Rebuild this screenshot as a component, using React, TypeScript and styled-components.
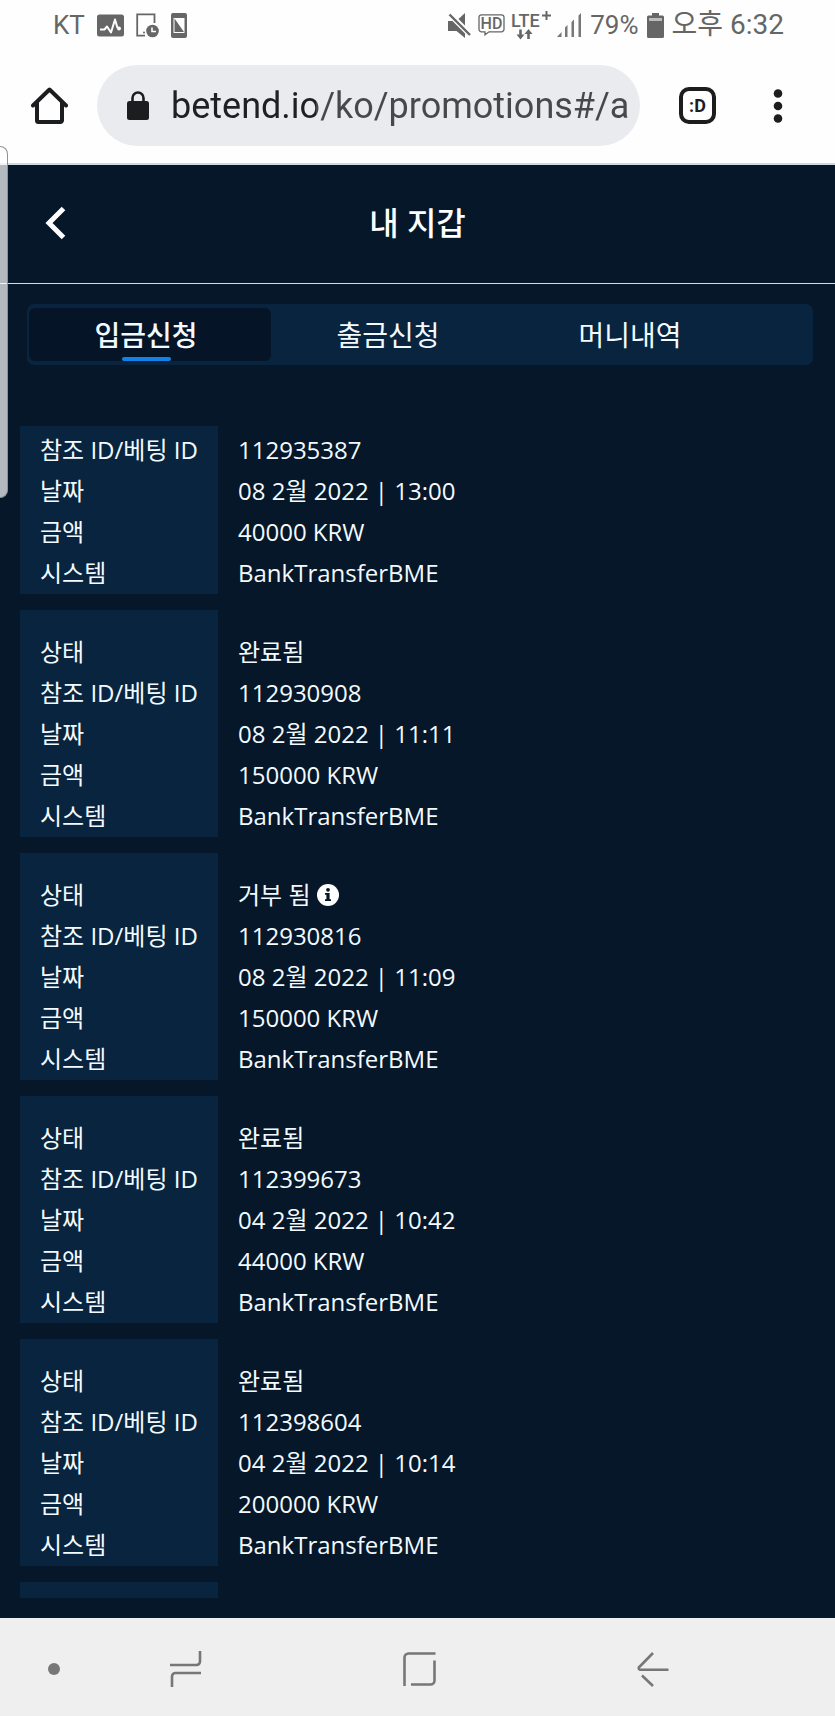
import React from "react";
import styled, { createGlobalStyle } from "styled-components";

const GlobalStyle = createGlobalStyle`
  *, *::before, *::after { box-sizing: border-box; }
  body { margin: 0; background: #051729; }
  button { border: 0; padding: 0; background: none; color: inherit; font: inherit; cursor: pointer; }
  svg { display: block; flex: none; }
`;

const textFont = `"Open Sans", "Noto Sans CJK KR", sans-serif`;
const systemFont = `Roboto, "Noto Sans CJK KR", sans-serif`;

const Screen = styled.div`
  position: relative;
  display: flex;
  flex-direction: column;
  min-height: 100vh;
  background: #051729;
  color: #f3fafe;
  font-family: ${textFont};
`;

const StatusBar = styled.div`
  display: flex;
  align-items: center;
  justify-content: space-between;
  height: 50px;
  padding: 0 51px 0 53px;
  background: #fefefe;
  color: #666;
  font: 26px/50px ${systemFont};
`;

const StatusGroup = styled.div<{ $gap: number }>`
  display: flex;
  align-items: center;
  gap: ${(p) => p.$gap}px;
  white-space: nowrap;
`;

const Clock = styled.time`
  font-size: 28px;
`;

const Toolbar = styled.div`
  display: flex;
  align-items: center;
  height: 115px;
  padding: 0 36px 2px 31px;
  background: #fefefe;
  border-bottom: 2px solid #d3dadd;
  color: #1c1d1f;
`;

const AddressBox = styled.label`
  display: flex;
  align-items: center;
  flex: 1;
  min-width: 0;
  height: 81px;
  margin: 0 39px 0 29px;
  padding: 0 10px 0 30px;
  gap: 22px;
  border-radius: 41px;
  background: #eaebef;
`;

const AddressInput = styled.input`
  flex: 1;
  min-width: 0;
  height: 60px;
  padding: 0;
  border: 0;
  outline: 0;
  background: linear-gradient(90deg, #1f2023 145px, #46484b 145px);
  background-clip: text;
  color: transparent;
  font: 36px Roboto, sans-serif;
`;

const TabSwitcher = styled.button`
  width: 37px;
  height: 37px;
  margin-right: 41px;
  border: 4px solid currentColor;
  border-radius: 10px;
  font: 700 18px/26px Roboto, sans-serif;
`;

const MenuButton = styled.button`
  display: flex;
  justify-content: center;
  width: 42px;
`;

const EdgeHandle = styled.div`
  position: absolute;
  top: 146px;
  left: 0;
  width: 8px;
  height: 352px;
  border: 1px solid #8a9399;
  border-left: 0;
  border-radius: 0 8px 8px 0;
  background: rgba(255, 255, 255, 0.7);
`;

const Header = styled.header`
  display: grid;
  grid-template-columns: 120px 1fr 120px;
  align-items: center;
  height: 119px;
  padding-bottom: 3px;
  border-bottom: 1px solid #d5dbe0;
`;

const BackButton = styled.button`
  justify-self: start;
  padding-left: 45px;
`;

const Title = styled.h1`
  margin: 0;
  text-align: center;
  font-size: 32px;
  line-height: 40px;
  font-weight: 500;
  color: #fff;
`;

const Tabs = styled.nav`
  display: flex;
  height: 61px;
  margin: 20px 22px 61px 27px;
  padding: 4px 58px 4px 2px;
  border-radius: 7px;
  background: #08243f;
`;

const Tab = styled.button<{ $active?: boolean }>`
  display: flex;
  flex-direction: column;
  align-items: center;
  justify-content: space-between;
  flex: 1;
  padding: 6px 8px 0 0;
  border-radius: 6px;
  background: ${(p) => (p.$active ? "#051527" : "transparent")};
  font-size: 28px;
  line-height: 43px;
  font-weight: ${(p) => (p.$active ? 500 : 400)};

  &::after {
    content: "";
    width: 49px;
    height: 4px;
    border-radius: 2px;
    background: ${(p) => (p.$active ? "#1481e6" : "transparent")};
  }
`;

const Records = styled.main`
  display: flex;
  flex-direction: column;
  flex: 1;
  gap: 16px;
  padding: 0 20px 19px;
`;

const Record = styled.dl<{ $rows: number }>`
  display: grid;
  grid-auto-rows: 1fr;
  min-height: ${(p) => (p.$rows === 4 ? 168 : 227)}px;
  margin: 0;
  padding-top: ${(p) => (p.$rows === 4 ? 3 : 21)}px;
  background: linear-gradient(90deg, #08243f 198px, transparent 198px);
`;

const NextRecord = styled.div`
  width: 198px;
  height: 16px;
  background: #08243f;
`;

const Row = styled.div`
  display: flex;
  align-items: center;
  font-size: 24px;
  line-height: 40px;
  white-space: nowrap;
`;

const Label = styled.dt`
  flex: none;
  width: 198px;
  padding-left: 20px;
`;

const Value = styled.dd`
  display: flex;
  align-items: center;
  gap: 7px;
  margin: 0;
  padding-left: 20px;
`;

const SystemNav = styled.nav`
  display: grid;
  grid-template-columns: 69px 1fr 1fr 1fr 65px;
  align-items: center;
  justify-items: center;
  height: 98px;
  padding-top: 4px;
  background: #efefef;
  color: #777;
`;

const PinButton = styled.button`
  width: 12px;
  height: 12px;
  margin-left: 39px;
  border-radius: 50%;
  background: currentColor;
`;

type Entry = { status?: string; info?: boolean; id: string; date: string; amount: string };

const entries: Entry[] = [
  { id: "112935387", date: "08 2월 2022 | 13:00", amount: "40000 KRW" },
  { status: "완료됨", id: "112930908", date: "08 2월 2022 | 11:11", amount: "150000 KRW" },
  { status: "거부 됨", info: true, id: "112930816", date: "08 2월 2022 | 11:09", amount: "150000 KRW" },
  { status: "완료됨", id: "112399673", date: "04 2월 2022 | 10:42", amount: "44000 KRW" },
  { status: "완료됨", id: "112398604", date: "04 2월 2022 | 10:14", amount: "200000 KRW" },
];

const InfoIcon = () => (
  <svg width="22" height="22" viewBox="0 0 22 22" aria-hidden="true">
    <circle cx="11" cy="11" r="11" fill="#fff" />
    <circle cx="11" cy="5.8" r="1.9" fill="#051729" />
    <path d="M8 9h4.600v6.300H14V17H8v-1.700h1.400v-4.600H8z" fill="#051729" />
  </svg>
);

const ActivityIcon = () => (
  <svg width="27" height="23" viewBox="0 0 27 23" aria-hidden="true">
    <rect width="27" height="22" y=".5" rx="2.5" fill="#666" />
    <path d="M3 15.500h4.500l2.500-3 4 6 4-13 2.500 8.500" fill="none" stroke="#fefefe" strokeWidth="2" strokeLinejoin="round" />
    <circle cx="22" cy="14.5" r="2" fill="#fefefe" />
  </svg>
);

const DeviceClockIcon = () => (
  <svg width="23" height="25" viewBox="0 0 23 25" aria-hidden="true">
    <path d="M18.500 10V1.300H1.200V22.700H9" fill="none" stroke="#666" strokeWidth="1.8" />
    <circle cx="8" cy="19.5" r="1" fill="#666" />
    <circle cx="16.5" cy="18" r="6.3" fill="#666" />
    <path d="M16 14.500v4h4" fill="none" stroke="#fefefe" strokeWidth="1.6" />
  </svg>
);

const PhoneIcon = () => (
  <svg width="16" height="25" viewBox="0 0 16 25" aria-hidden="true">
    <rect width="16" height="25" rx="2" fill="#666" />
    <path d="M2.500 5h11v15h-11z" fill="#fefefe" />
    <path d="M3.500 5.500L13 19H3.500z" fill="#666" />
  </svg>
);

const MuteIcon = () => (
  <svg width="24" height="25" viewBox="0 0 24 25" aria-hidden="true">
    <path d="M0 8h4.500L17 20.500V25L8.500 18H0zM10.500 6L17 0v12.500z" fill="#666" />
    <path d="M1.500 1.500L22 22" stroke="#666" strokeWidth="2.4" />
  </svg>
);

const HdIcon = () => (
  <svg width="27" height="22" viewBox="0 0 27 22" aria-hidden="true">
    <path d="M3.500.8h20a2.500 2.500 0 0 1 2.500 2.500v12a2.500 2.500 0 0 1-2.500 2.500H11l-4 3v-3H3.500A2.500 2.500 0 0 1 1 15.300v-12A2.500 2.500 0 0 1 3.500.8z" fill="none" stroke="#666" strokeWidth="1.3" />
    <text x="13.5" y="15" textAnchor="middle" fontFamily="Roboto" fontSize="16" fontWeight="500" fill="#666">HD</text>
  </svg>
);

const LteIcon = () => (
  <svg width="40" height="29" viewBox="0 0 40 29" aria-hidden="true">
    <text x="0" y="16" fontFamily="Roboto" fontSize="18" fontWeight="500" fill="#666">LTE</text>
    <path d="M31 4.500h9M35.500 0v9" stroke="#666" strokeWidth="2" />
    <path d="M9.500 18.500v6M17.500 28v-6" stroke="#666" strokeWidth="2.600" />
    <path d="M5.500 23.500h8l-4 5zM13.500 23h8l-4-5z" fill="#666" />
  </svg>
);

const SignalIcon = () => (
  <svg width="25" height="24" viewBox="0 0 25 24" aria-hidden="true">
    <path d="M0 24l4.500-5v5zM8 14.500l2.500-2.500v12H8zM14.500 9L17 6.500V24h-2.500zM21.500 2.500L24 0v24h-2.500z" fill="#777" />
  </svg>
);

const BatteryIcon = () => (
  <svg width="17" height="25" viewBox="0 0 17 25" aria-hidden="true">
    <path d="M5 0h7v2.500h3.500A1.500 1.500 0 0 1 17 4v19.500a1.500 1.500 0 0 1-1.500 1.500h-14A1.500 1.500 0 0 1 0 23.500V4a1.500 1.500 0 0 1 1.500-1.500H5z" fill="#666" />
    <path d="M2 5h13v3H2z" fill="#bbb" />
  </svg>
);

export default function App() {
  return (
    <>
      <GlobalStyle />
      <Screen>
        <StatusBar>
          <StatusGroup $gap={12}>
            <span>KT</span>
            <ActivityIcon />
            <DeviceClockIcon />
            <PhoneIcon />
          </StatusGroup>
          <StatusGroup $gap={8}>
            <StatusGroup $gap={6}>
              <MuteIcon />
              <HdIcon />
              <LteIcon />
              <SignalIcon />
            </StatusGroup>
            <span>79%</span>
            <BatteryIcon />
            <Clock>오후 6:32</Clock>
          </StatusGroup>
        </StatusBar>

        <Toolbar>
          <button aria-label="홈">
            <svg width="37" height="38" viewBox="0 0 37 38" fill="none" stroke="currentColor" strokeWidth="4" strokeLinejoin="round" strokeLinecap="round">
              <path d="M2 18.500L18.500 2.500 35 18.500M6 16v17.500a1.500 1.500 0 0 0 1.500 1.500h22a1.500 1.500 0 0 0 1.500-1.500V16" />
            </svg>
          </button>
          <AddressBox>
            <svg width="22" height="29" viewBox="0 0 22 29" aria-hidden="true">
              <rect y="10" width="22" height="19" rx="2.5" fill="#1c1d1f" />
              <path d="M5.500 11V7a5.500 5.500 0 0 1 11 0v4" fill="none" stroke="#1c1d1f" strokeWidth="2.6" />
            </svg>
            <AddressInput aria-label="주소" defaultValue="betend.io/ko/promotions#/a" />
          </AddressBox>
          <TabSwitcher>:D</TabSwitcher>
          <MenuButton aria-label="메뉴">
            <svg width="10" height="34" viewBox="0 0 10 34" fill="currentColor">
              <circle cx="5" cy="4.5" r="4.3" />
              <circle cx="5" cy="17" r="4.3" />
              <circle cx="5" cy="29.5" r="4.3" />
            </svg>
          </MenuButton>
        </Toolbar>

        <Header>
          <BackButton aria-label="뒤로">
            <svg width="21" height="34" viewBox="0 0 21 34" fill="none" stroke="#fff" strokeWidth="5">
              <path d="M18.500 2.500L4 17l14.500 14.500" />
            </svg>
          </BackButton>
          <Title>내 지갑</Title>
        </Header>

        <Tabs>
          <Tab $active>입금신청</Tab>
          <Tab>출금신청</Tab>
          <Tab>머니내역</Tab>
        </Tabs>

        <Records>
          {entries.map((e) => (
            <Record key={e.id} $rows={e.status ? 5 : 4}>
              {e.status && (
                <Row>
                  <Label>상태</Label>
                  <Value>
                    {e.status}
                    {e.info && <InfoIcon />}
                  </Value>
                </Row>
              )}
              <Row><Label>참조 ID/베팅 ID</Label><Value>{e.id}</Value></Row>
              <Row><Label>날짜</Label><Value>{e.date}</Value></Row>
              <Row><Label>금액</Label><Value>{e.amount}</Value></Row>
              <Row><Label>시스템</Label><Value>BankTransferBME</Value></Row>
            </Record>
          ))}
          <NextRecord />
        </Records>

        <SystemNav>
          <PinButton aria-label="고정" />
          <button aria-label="최근 앱">
            <svg width="32" height="36" viewBox="0 0 32 36" fill="none" stroke="currentColor" strokeWidth="2.6">
              <path d="M30 0v10.500a3.500 3.500 0 0 1-3.500 3.500H0M2 36V25.500A3.500 3.500 0 0 1 5.500 22H31" />
            </svg>
          </button>
          <button aria-label="홈 화면">
            <svg width="33" height="35" viewBox="0 0 33 35" fill="none" stroke="currentColor" strokeWidth="2.6">
              <path d="M1.500 34V5.500A4 4 0 0 1 5.500 1.500H32.500M31.500 8.500V28.500a4 4 0 0 1-4 4H8" />
            </svg>
          </button>
          <button aria-label="뒤로 가기">
            <svg width="32" height="35" viewBox="0 0 32 35" fill="none" stroke="currentColor" strokeWidth="2.6" strokeLinejoin="round">
              <path d="M16 1L1.800 15.500Q1.500 17.800 3.500 17.800H31.500M5 23.500L16 34" />
            </svg>
          </button>
        </SystemNav>
        <EdgeHandle />
      </Screen>
    </>
  );
}
